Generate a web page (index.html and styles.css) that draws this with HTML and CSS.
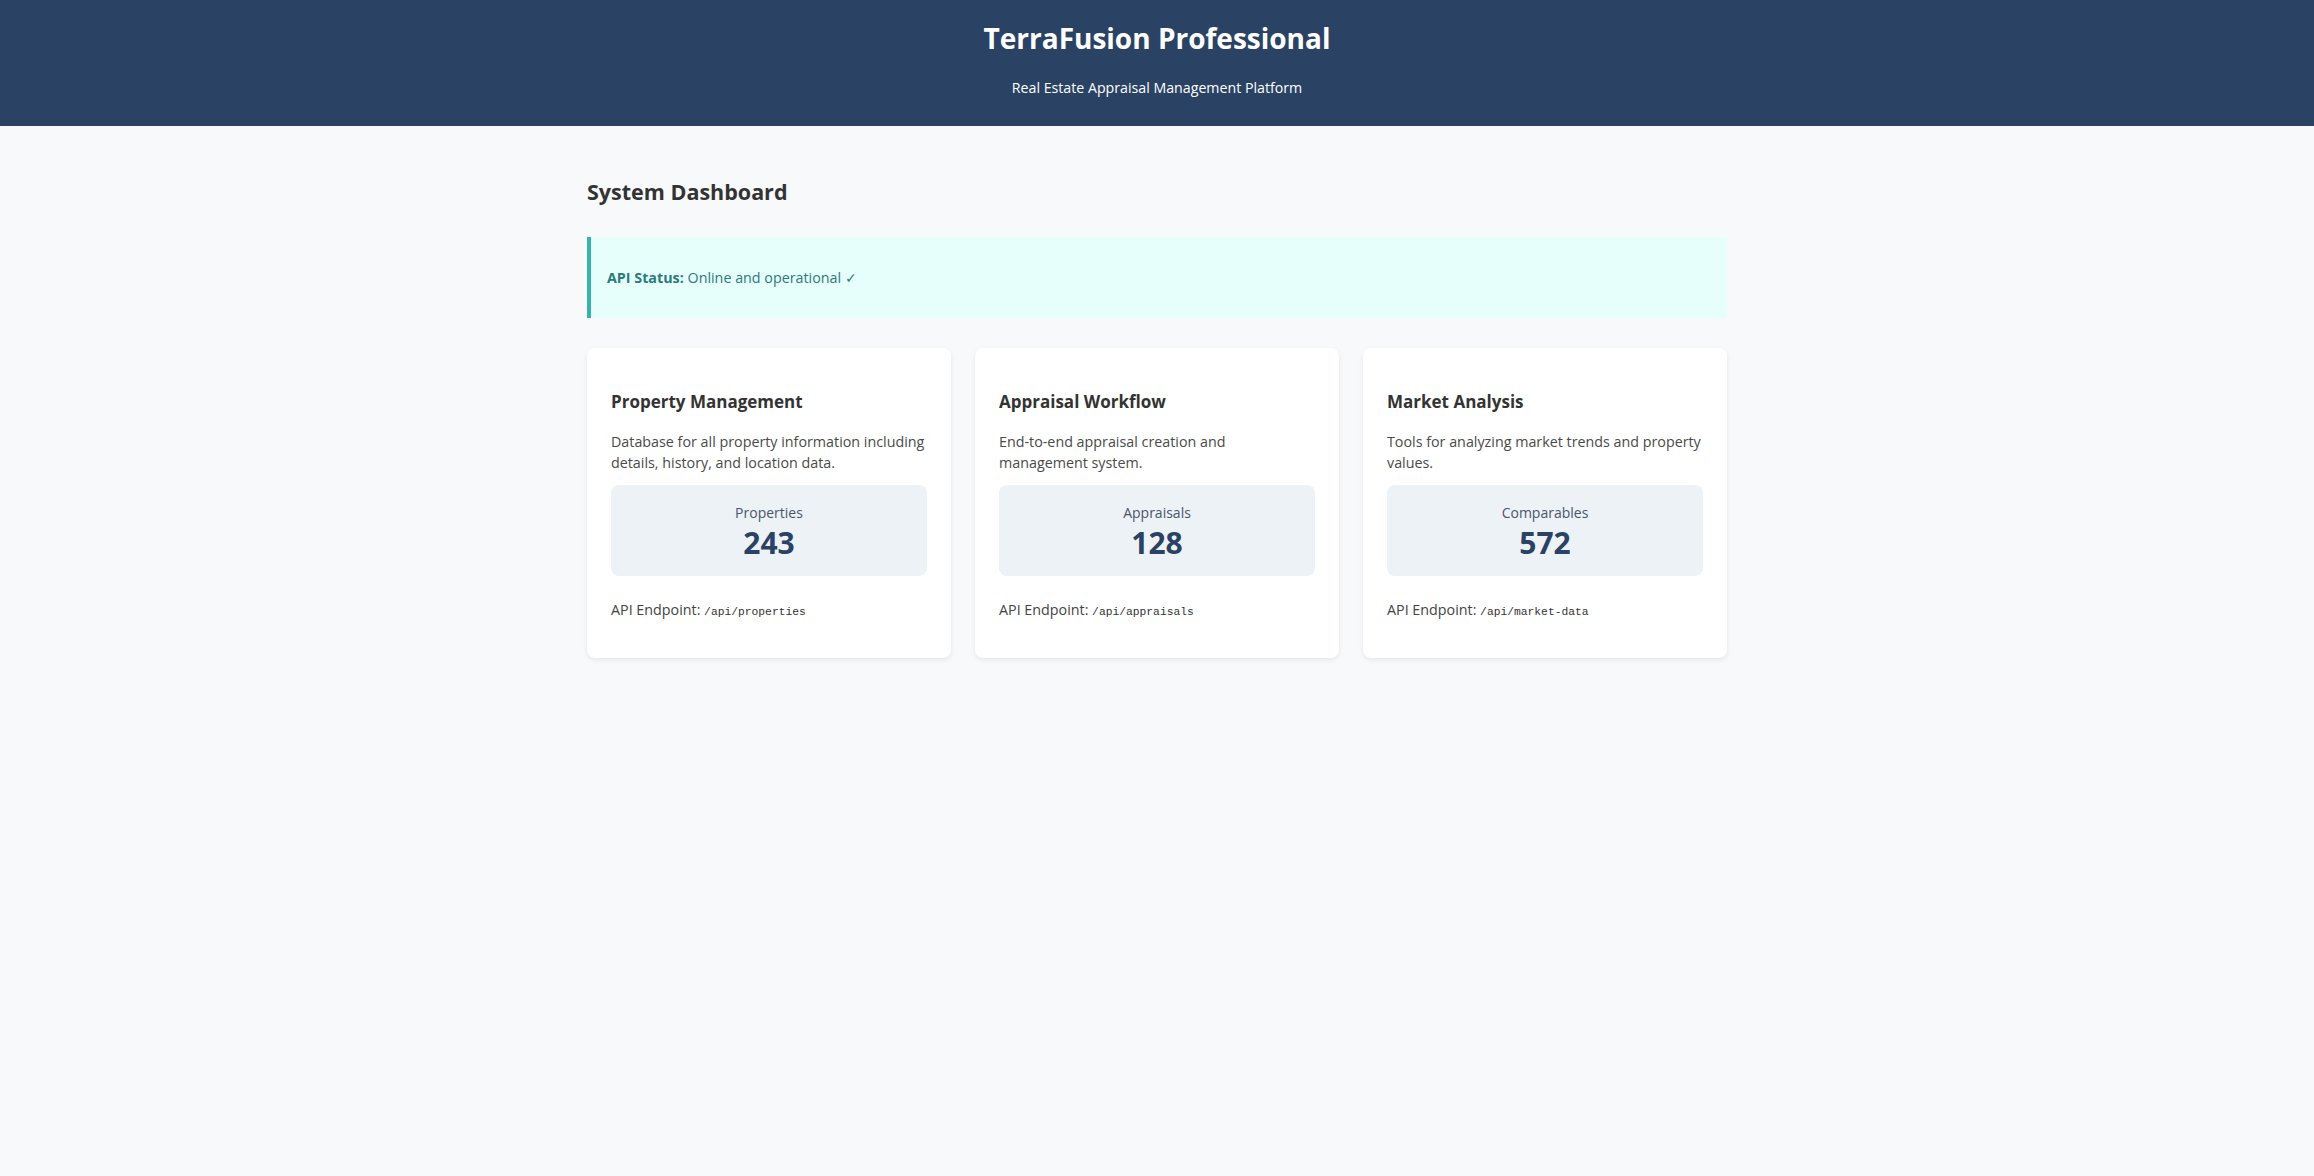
FILE: index.html
```html
<!DOCTYPE html>
<html lang="en">
<head>
<meta charset="utf-8">
<title>TerraFusion Professional</title>
<link rel="stylesheet" href="styles.css">
</head>
<body>
<header class="site-header">
  <h1 class="site-title">TerraFusion Professional</h1>
  <p class="site-subtitle">Real Estate Appraisal Management Platform</p>
</header>
<main class="container">
  <h2 class="page-title">System Dashboard</h2>
  <div class="status-box">
    <strong>API Status:</strong> Online and operational ✓
  </div>
  <div class="card-grid">
    <section class="card">
      <h3 class="card-title">Property Management</h3>
      <p class="card-desc">Database for all property information including details, history, and location data.</p>
      <div class="stat">
        <div class="stat-label">Properties</div>
        <div class="stat-value">243</div>
      </div>
      <p class="endpoint">API Endpoint: <code>/api/properties</code></p>
    </section>
    <section class="card">
      <h3 class="card-title">Appraisal Workflow</h3>
      <p class="card-desc">End-to-end appraisal creation and<br>management system.</p>
      <div class="stat">
        <div class="stat-label">Appraisals</div>
        <div class="stat-value">128</div>
      </div>
      <p class="endpoint">API Endpoint: <code>/api/appraisals</code></p>
    </section>
    <section class="card">
      <h3 class="card-title">Market Analysis</h3>
      <p class="card-desc">Tools for analyzing market trends and property values.</p>
      <div class="stat">
        <div class="stat-label">Comparables</div>
        <div class="stat-value">572</div>
      </div>
      <p class="endpoint">API Endpoint: <code>/api/market-data</code></p>
    </section>
  </div>
</main>
</body>
</html>
```

FILE: styles.css
```css
* { box-sizing: border-box; }
html, body {
  margin: 0;
  padding: 0;
}
body {
  background: #f7f9fb;
  color: #333333;
  font-family: "Open Sans", "Noto Sans", sans-serif;
  min-height: 100vh;
}
.site-header {
  background: #2a4365;
  color: #ffffff;
  text-align: center;
  padding: 18px 0 0;
  height: 126px;
}
.site-title {
  margin: 0;
  font-size: 28px;
  line-height: 40px;
  font-weight: 700;
}
.site-subtitle {
  margin: 20px 0 0;
  font-size: 14.2px;
  line-height: 20px;
}
.container {
  max-width: 1140px;
  margin: 0 auto;
  padding-top: 51px;
}
.page-title {
  margin: 0 0 30px;
  font-size: 21.5px;
  line-height: 30px;
  font-weight: 700;
  color: #333333;
}
.status-box {
  background: #e6fffa;
  border-left: 4px solid #38b2ac;
  color: #2c7a7b;
  font-size: 14.3px;
  line-height: 21px;
  padding: 30px 16px;
  height: 81px;
}
.status-box strong { font-weight: 700; }
.card-grid {
  margin-top: 30px;
  display: grid;
  grid-template-columns: repeat(3, 1fr);
  gap: 24px;
}
.card {
  background: #ffffff;
  border-radius: 8px;
  box-shadow: 0 2px 5px rgba(0,0,0,0.08);
  padding: 42px 24px 24px;
  height: 310px;
}
.card-title {
  margin: 0 0 17px;
  font-size: 17px;
  line-height: 24px;
  font-weight: 700;
  color: #333333;
}
.card-desc {
  margin: 0 0 12px;
  font-size: 14.3px;
  line-height: 21px;
  color: #4a4a4a;
}
.stat {
  background: #edf2f7;
  border-radius: 8px;
  text-align: center;
  padding: 18px 10px;
  height: 91px;
}
.stat-label {
  font-size: 14px;
  line-height: 20px;
  color: #4a5568;
}
.stat-value {
  margin-top: 3px;
  font-size: 30px;
  line-height: 34px;
  font-weight: 700;
  color: #2a4365;
}
.endpoint {
  margin: 24px 0 0;
  font-size: 14.3px;
  line-height: 20px;
  color: #444444;
}
.endpoint code {
  font-family: "Liberation Mono", "DejaVu Sans Mono", monospace;
  font-size: 11.3px;
  color: #333333;
}
```
